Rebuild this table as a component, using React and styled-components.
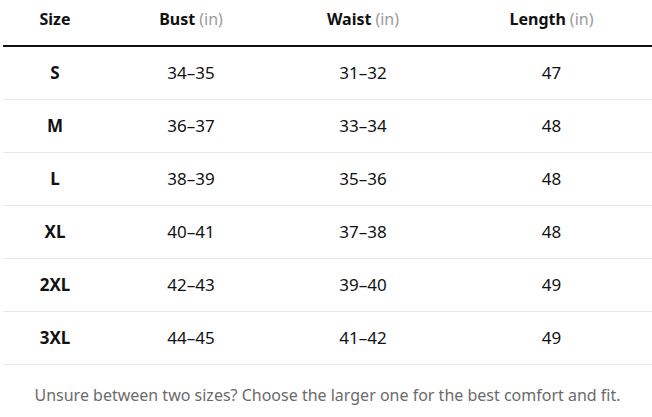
import React from "react";
import styled, { createGlobalStyle } from "styled-components";

const GlobalStyle = createGlobalStyle`
  html, body {
    margin: 0;
    padding: 0;
    background: #ffffff;
  }
  body {
    font-family: "Noto Sans", "Open Sans", sans-serif;
    color: #111111;
  }
`;

const Wrapper = styled.div`
  width: 652px;
  padding-left: 3px;
  box-sizing: border-box;
`;

const Grid = styled.div`
  display: grid;
  grid-template-columns: 104px 168px 176px 1fr;
`;

const HeadRow = styled(Grid)`
  height: 45px;
  border-bottom: 2px solid #111111;
  box-sizing: content-box;
`;

const HeadCell = styled.div`
  display: flex;
  align-items: center;
  justify-content: center;
  padding-bottom: 8px;
  font-size: 16px;
  font-weight: 700;
  color: #111111;

  span {
    font-weight: 400;
    color: #9a9a9a;
    margin-left: 4px;
  }
`;

const Row = styled(Grid)`
  height: 52px;
  border-bottom: 1px solid #e9e9e9;
`;

const Cell = styled.div`
  display: flex;
  align-items: center;
  justify-content: center;
  padding-bottom: 1px;
  font-size: 17px;
  font-weight: ${(p) => (p.$strong ? 700 : 400)};
  color: #111111;
`;

const Note = styled.p`
  margin: 19px 0 0;
  text-align: center;
  font-size: 16px;
  color: #6b6b6b;
`;

const sizes = [
  { size: "S", bust: "34–35", waist: "31–32", length: "47" },
  { size: "M", bust: "36–37", waist: "33–34", length: "48" },
  { size: "L", bust: "38–39", waist: "35–36", length: "48" },
  { size: "XL", bust: "40–41", waist: "37–38", length: "48" },
  { size: "2XL", bust: "42–43", waist: "39–40", length: "49" },
  { size: "3XL", bust: "44–45", waist: "41–42", length: "49" },
];

export default function App() {
  return (
    <Wrapper>
      <GlobalStyle />
      <HeadRow>
        <HeadCell>Size</HeadCell>
        <HeadCell>
          Bust<span>(in)</span>
        </HeadCell>
        <HeadCell>
          Waist<span>(in)</span>
        </HeadCell>
        <HeadCell>
          Length<span>(in)</span>
        </HeadCell>
      </HeadRow>
      {sizes.map((row) => (
        <Row key={row.size}>
          <Cell $strong>{row.size}</Cell>
          <Cell>{row.bust}</Cell>
          <Cell>{row.waist}</Cell>
          <Cell>{row.length}</Cell>
        </Row>
      ))}
      <Note>
        Unsure between two sizes? Choose the larger one for the best comfort
        and fit.
      </Note>
    </Wrapper>
  );
}
